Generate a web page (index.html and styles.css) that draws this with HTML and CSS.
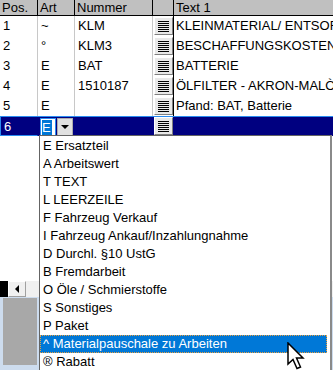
FILE: index.html
```html
<!DOCTYPE html>
<html lang="de">
<head>
  <meta charset="UTF-8" />
  <title>Positionen</title>
  <link rel="stylesheet" href="styles.css">
</head>
<body>
  <div class="grid">
    <div class="row head">
      <div class="cell">Pos.</div>
      <div class="cell">Art</div>
      <div class="cell">Nummer</div>
      <div class="cell"></div>
      <div class="cell">Text 1</div>
    </div>

    <div class="row">
      <div class="cell">1</div>
      <div class="cell">~</div>
      <div class="cell">KLM</div>
      <div class="cell btn-cell"><span class="memo"><i></i></span></div>
      <div class="cell">KLEINMATERIAL/ ENTSORGUNG</div>
    </div>
    <div class="row">
      <div class="cell">2</div>
      <div class="cell">°</div>
      <div class="cell">KLM3</div>
      <div class="cell btn-cell"><span class="memo"><i></i></span></div>
      <div class="cell">BESCHAFFUNGSKOSTEN</div>
    </div>
    <div class="row">
      <div class="cell">3</div>
      <div class="cell">E</div>
      <div class="cell">BAT</div>
      <div class="cell btn-cell"><span class="memo"><i></i></span></div>
      <div class="cell">BATTERIE</div>
    </div>
    <div class="row">
      <div class="cell">4</div>
      <div class="cell">E</div>
      <div class="cell">1510187</div>
      <div class="cell btn-cell"><span class="memo"><i></i></span></div>
      <div class="cell">ÖLFILTER - AKRON-MALÒ</div>
    </div>
    <div class="row">
      <div class="cell">5</div>
      <div class="cell">E</div>
      <div class="cell"></div>
      <div class="cell btn-cell"><span class="memo"><i></i></span></div>
      <div class="cell">Pfand: BAT, Batterie</div>
    </div>
    <div class="row selected">
      <div class="cell focus">6</div>
      <div class="cell combo-cell">
        <span class="combo"><span class="combo-text">E</span></span>
        <span class="combo-btn"></span>
      </div>
      <div class="cell"></div>
      <div class="cell btn-cell"><span class="memo"><i></i></span></div>
      <div class="cell"></div>
    </div>

    <div class="row empty">
      <div class="cell"></div>
    </div>

    <div class="hscroll">
      <span class="hs-dark"></span>
      <span class="hs-arrow"></span>
      <span class="hs-track"></span>
    </div>
  </div>

  <div class="below">
    <div class="panel"></div>
  </div>

  <ul class="dropdown">
    <li>E Ersatzteil</li>
    <li>A Arbeitswert</li>
    <li>T TEXT</li>
    <li>L LEERZEILE</li>
    <li>F Fahrzeug Verkauf</li>
    <li>I Fahrzeug Ankauf/Inzahlungnahme</li>
    <li>D Durchl. §10 UstG</li>
    <li>B Fremdarbeit</li>
    <li>O Öle / Schmierstoffe</li>
    <li>S Sonstiges</li>
    <li>P Paket</li>
    <li class="active">^ Materialpauschale zu Arbeiten</li>
    <li>® Rabatt</li>
  </ul>

  <svg class="cursor" width="20" height="28" viewBox="0 0 20 28">
    <path d="M1 1 L1 22 L6 17.5 L10 26.5 L13.5 25 L9.5 16 L16 16 Z" fill="#fff" stroke="#000" stroke-width="1.5" stroke-linejoin="miter"/>
  </svg>
</body>
</html>
```

FILE: styles.css
```css
* {
  box-sizing: border-box;
}

body {
  margin: 0;
  width: 333px;
  height: 370px;
  overflow: hidden;
  background: #cddcee;
  font-family: "Liberation Sans", Arial, sans-serif;
  font-size: 13px;
  color: #000;
  position: relative;
}

.grid {
  width: 333px;
  height: 297px;
  background: #fff;
  display: flex;
  flex-direction: column;
  overflow: hidden;
}

.row {
  display: grid;
  grid-template-columns: 38px 37px 78px 21px 1fr;
  height: 20px;
  flex-shrink: 0;
}

.cell {
  border-right: 1px solid #c8c8c8;
  padding: 0 0 0 3px;
  line-height: 20px;
  white-space: nowrap;
  overflow: hidden;
}

.cell:first-child {
  padding-left: 3px;
}

.cell:last-child {
  border-right: none;
  padding-left: 2px;
}

.head {
  height: 16px;
  background: #c0c0c0;
  border-bottom: 1px solid #000;
}

.head .cell {
  line-height: 15px;
  border-right: 1px solid #000;
  padding-left: 2px;
}

.head .cell:last-child {
  border-right: none;
}

.btn-cell {
  padding: 1px 0 1px 1px;
  border-right: 1px solid #000;
}

.memo {
  display: flex;
  align-items: center;
  justify-content: center;
  width: 19px;
  height: 18px;
  background: #e8e8e8;
  border: 1px solid;
  border-color: #fff #808080 #808080 #fff;
}

.memo i {
  display: block;
  width: 11px;
  height: 11px;
  background: repeating-linear-gradient(#000 0 1px, transparent 1px 2px);
}

.selected {
  background: #000080;
  color: #fff;
  border-top: 1px solid #2a8cf0;
}

.selected .cell {
  line-height: 19px;
  border-right-color: #000080;
}

.selected .btn-cell {
  padding-top: 0;
}

.focus {
  border: 1px solid #2a8cf0;
  border-top: none;
  padding-left: 2px;
}

.combo-cell {
  display: flex;
  align-items: center;
  gap: 1px;
  padding: 0 1px 0 2px;
}

.combo {
  width: 16px;
  height: 18px;
  background: #fff;
  border: 1px solid #2a8cf0;
  padding: 1px 0 0 1px;
}

.combo-text {
  display: block;
  width: 10px;
  height: 15px;
  line-height: 15px;
  background: #0078d7;
  color: #fff;
}

.combo-btn {
  width: 17px;
  height: 18px;
  background: #e1e1e1;
  border: 1px solid #adadad;
  display: flex;
  align-items: center;
  justify-content: center;
}

.combo-btn::after {
  content: "";
  border-left: 4px solid transparent;
  border-right: 4px solid transparent;
  border-top: 4px solid #000;
}

.empty {
  flex: 1;
}

.hscroll {
  height: 16px;
  display: flex;
  flex-shrink: 0;
}

.hs-dark {
  width: 8px;
  background: #000;
}

.hs-arrow {
  width: 18px;
  background: #f0f0f0;
  border: 1px solid;
  border-color: #fff #a0a0a0 #a0a0a0 #fff;
  display: flex;
  align-items: center;
  justify-content: center;
}

.hs-arrow::after {
  content: "";
  border-top: 4px solid transparent;
  border-bottom: 4px solid transparent;
  border-right: 4px solid #000;
}

.hs-track {
  flex: 1;
  background: #f0f0f0;
}

.below {
  padding: 1px 0 0 3px;
}

.panel {
  width: 34px;
  height: 67px;
  background: #a8a8a8;
}

.dropdown {
  position: absolute;
  left: 39px;
  top: 135px;
  width: 293px;
  height: 240px;
  margin: 0;
  padding: 1px 3px 0 0;
  list-style: none;
  background: #fff;
  border: 1px solid #646464;
  border-right: 2px solid #8a8a8a;
}

.dropdown li {
  height: 18px;
  line-height: 18px;
  padding-left: 3px;
  white-space: nowrap;
}

.dropdown .active {
  background: #0078d7;
  color: #fff;
  border: 1px dotted #e8a040;
  line-height: 16px;
  padding-left: 2px;
}

.cursor {
  position: absolute;
  left: 287px;
  top: 342px;
}
```
